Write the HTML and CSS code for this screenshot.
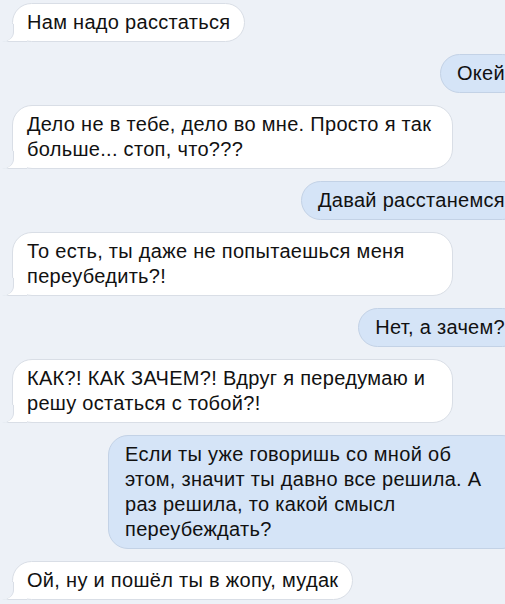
FILE: index.html
```html
<!DOCTYPE html>
<html lang="ru">
<head>
<meta charset="utf-8">
<link rel="stylesheet" href="styles.css">
</head>
<body>
<div class="chat">
  <div class="msg in">Нам надо расстаться</div>
  <div class="msg out">Окей</div>
  <div class="msg in">Дело не в тебе, дело во мне. Просто я так больше... стоп, что???</div>
  <div class="msg out">Давай расстанемся</div>
  <div class="msg in">То есть, ты даже не попытаешься меня переубедить?!</div>
  <div class="msg out">Нет, а зачем?</div>
  <div class="msg in">КАК?! КАК ЗАЧЕМ?! Вдруг я передумаю и решу остаться с тобой?!</div>
  <div class="msg out">Если ты уже говоришь со мной об этом, значит ты давно все решила. А раз решила, то какой смысл переубеждать?</div>
  <div class="msg in">Ой, ну и пошёл ты в жопу, мудак</div>
</div>
</body>
</html>
```
FILE: styles.css
```css
html, body {
  margin: 0;
  padding: 0;
}
body {
  width: 505px;
  height: 604px;
  overflow: hidden;
  background: #edf1f7;
  font-family: "Liberation Sans", Arial, sans-serif;
  color: #111111;
}
.chat {
  width: 522px;
  padding: 3px 0 0 12px;
  display: flex;
  flex-direction: column;
  gap: 12px;
  box-sizing: border-box;
}
.msg {
  position: relative;
  font-size: 20px;
  line-height: 25px;
  letter-spacing: 0.3px;
  padding: 6px 14px;
  border-radius: 20px;
  box-sizing: border-box;
}
.in {
  align-self: flex-start;
  max-width: 441px;
  background: #ffffff;
  border: 1px solid #d9dee6;
}
.out {
  align-self: flex-end;
  max-width: 414px;
  background: #d5e4f7;
  border: 1px solid #c3d2e6;
  padding-left: 16px;
  padding-right: 16px;
}
.in::before {
  content: "";
  position: absolute;
  left: -7px;
  bottom: -1px;
  width: 20px;
  height: 16px;
  background: #ffffff;
  border-left: 1px solid #d9dee6;
  border-bottom: 1px solid #d9dee6;
  border-bottom-left-radius: 4px 2px;
  clip-path: polygon(0 100%, 8px 0, 100% 0, 100% 100%);
}
.in::after {
  content: "";
  position: absolute;
  left: -14px;
  bottom: -1px;
  width: 14px;
  height: 18px;
  background: #edf1f7;
  border-bottom-right-radius: 12px 10px;
  border-right: 1px solid #d9dee6;
}
```
